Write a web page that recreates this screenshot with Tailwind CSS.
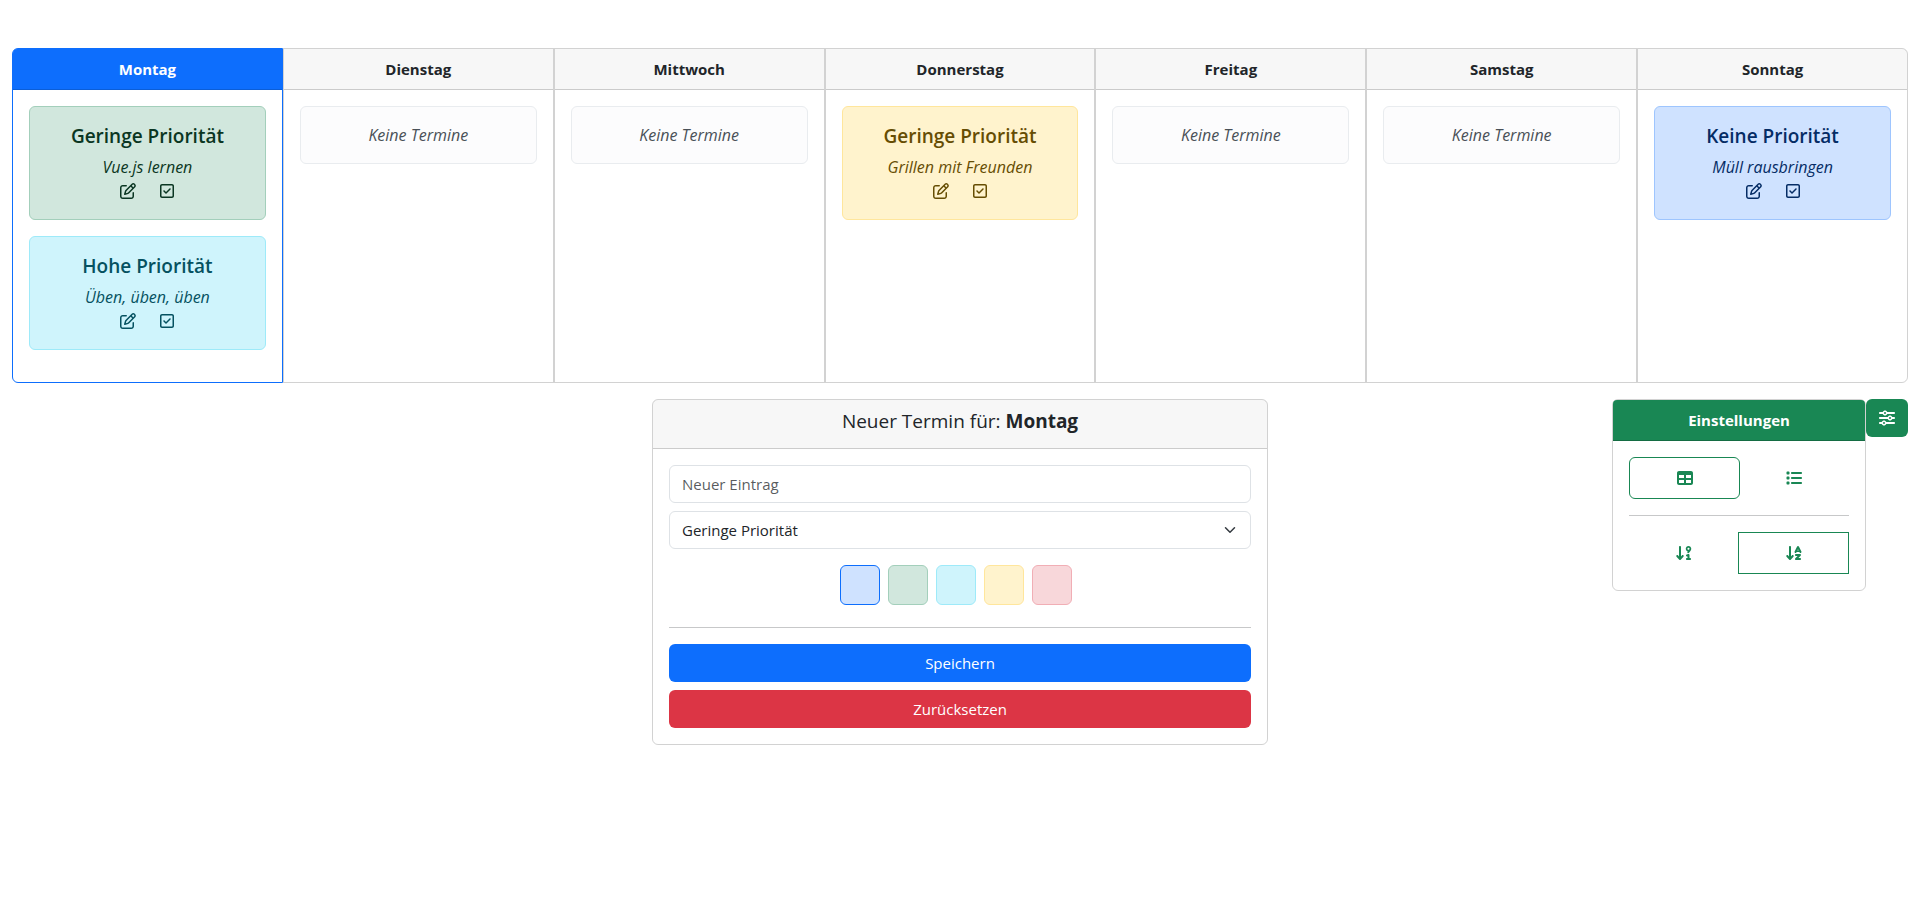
<!DOCTYPE html>
<html lang="de">
<head>
<meta charset="utf-8">
<meta name="viewport" content="width=device-width, initial-scale=1">
<title>Wochenplaner</title>
<script src="https://cdn.jsdelivr.net/npm/@tailwindcss/browser@4"></script>
</head>
<body class="bg-white font-['Open_Sans','Noto_Sans',sans-serif] text-[15px] leading-6 text-[#212529]">

<svg class="hidden" aria-hidden="true">
  <symbol id="edit" viewBox="0 0 512 512"><path d="M441 58.9L453.1 71c9.4 9.4 9.4 24.6 0 33.9L424 134.1 377.9 88 407 58.9c9.4-9.4 24.6-9.4 33.9 0zM209.8 256.2L344 121.9 390.1 168 255.8 302.2c-2.9 2.9-6.5 5-10.4 6.1l-58.5 16.7 16.7-58.5c1.1-3.9 3.2-7.5 6.1-10.4zM373.1 25L175.8 222.2c-8.7 8.7-15 19.4-18.3 31.1l-28.6 100c-2.4 8.4-.1 17.4 6.1 23.6s15.2 8.5 23.6 6.1l100-28.6c11.8-3.4 22.5-9.7 31.1-18.3L487 138.9c28.1-28.1 28.1-73.7 0-101.8L474.9 25C446.8-3.1 401.2-3.1 373.1 25zM88 64C39.4 64 0 103.4 0 152V424c0 48.6 39.4 88 88 88H360c48.6 0 88-39.4 88-88V312c0-13.3-10.7-24-24-24s-24 10.7-24 24V424c0 22.1-17.9 40-40 40H88c-22.1 0-40-17.9-40-40V152c0-22.1 17.9-40 40-40H200c13.3 0 24-10.7 24-24s-10.7-24-24-24H88z"/></symbol>
  <symbol id="check" viewBox="0 0 448 512"><path d="M64 80c-8.8 0-16 7.2-16 16V416c0 8.8 7.2 16 16 16H384c8.8 0 16-7.2 16-16V96c0-8.8-7.2-16-16-16H64zM0 96C0 60.7 28.7 32 64 32H384c35.3 0 64 28.7 64 64V416c0 35.3-28.7 64-64 64H64c-35.3 0-64-28.7-64-64V96zM337 209L209 337c-9.4 9.4-24.6 9.4-33.9 0l-64-64c-9.4-9.4-9.4-24.6 0-33.9s24.6-9.4 33.9 0l47 47L303 175c9.4-9.4 24.6-9.4 33.9 0s9.4 24.6 0 33.9z"/></symbol>
</svg>

<main class="px-3 pt-12" aria-label="Wochenplaner">
  <div class="grid grid-cols-7 text-center">
    <section class="rounded-l-md border border-[#0d6efd]">
      <h2 class="rounded-tl border-b border-[#0b5ed7] bg-[#0d6efd] py-2 font-bold text-white">Montag</h2>
      <div class="p-4">
        <article class="mb-4 rounded-md border border-[#a3cfbb] bg-[#d1e7dd] p-4 text-[#0a3622]">
          <h3 class="mb-[6px] text-[19px] leading-[26px] font-semibold">Geringe Priorität</h3>
          <p class="text-base italic">Vue.js lernen</p>
          <div class="flex h-6 items-center justify-center gap-6">
            <button type="button" aria-label="Bearbeiten"><svg class="h-4 w-4 fill-current"><use href="#edit"/></svg></button>
            <button type="button" aria-label="Erledigt"><svg class="h-4 w-3.5 fill-current"><use href="#check"/></svg></button>
          </div>
        </article>
        <article class="mb-4 rounded-md border border-[#9eeaf9] bg-[#cff4fc] p-4 text-[#055160]">
          <h3 class="mb-[6px] text-[19px] leading-[26px] font-semibold">Hohe Priorität</h3>
          <p class="text-base italic">Üben, üben, üben</p>
          <div class="flex h-6 items-center justify-center gap-6">
            <button type="button" aria-label="Bearbeiten"><svg class="h-4 w-4 fill-current"><use href="#edit"/></svg></button>
            <button type="button" aria-label="Erledigt"><svg class="h-4 w-3.5 fill-current"><use href="#check"/></svg></button>
          </div>
        </article>
      </div>
    </section>

    <section class="border border-black/[.175]">
      <h2 class="border-b border-black/[.175] bg-black/[.03] py-2 font-bold">Dienstag</h2>
      <div class="p-4"><p class="rounded-md border border-[#e9ecef] bg-[#fcfcfd] p-4 text-base text-[#495057] italic">Keine Termine</p></div>
    </section>

    <section class="border border-black/[.175]">
      <h2 class="border-b border-black/[.175] bg-black/[.03] py-2 font-bold">Mittwoch</h2>
      <div class="p-4"><p class="rounded-md border border-[#e9ecef] bg-[#fcfcfd] p-4 text-base text-[#495057] italic">Keine Termine</p></div>
    </section>

    <section class="border border-black/[.175]">
      <h2 class="border-b border-black/[.175] bg-black/[.03] py-2 font-bold">Donnerstag</h2>
      <div class="p-4">
        <article class="rounded-md border border-[#ffe69c] bg-[#fff3cd] p-4 text-[#664d03]">
          <h3 class="mb-[6px] text-[19px] leading-[26px] font-semibold">Geringe Priorität</h3>
          <p class="text-base italic">Grillen mit Freunden</p>
          <div class="flex h-6 items-center justify-center gap-6">
            <button type="button" aria-label="Bearbeiten"><svg class="h-4 w-4 fill-current"><use href="#edit"/></svg></button>
            <button type="button" aria-label="Erledigt"><svg class="h-4 w-3.5 fill-current"><use href="#check"/></svg></button>
          </div>
        </article>
      </div>
    </section>

    <section class="border border-black/[.175]">
      <h2 class="border-b border-black/[.175] bg-black/[.03] py-2 font-bold">Freitag</h2>
      <div class="p-4"><p class="rounded-md border border-[#e9ecef] bg-[#fcfcfd] p-4 text-base text-[#495057] italic">Keine Termine</p></div>
    </section>

    <section class="border border-black/[.175]">
      <h2 class="border-b border-black/[.175] bg-black/[.03] py-2 font-bold">Samstag</h2>
      <div class="p-4"><p class="rounded-md border border-[#e9ecef] bg-[#fcfcfd] p-4 text-base text-[#495057] italic">Keine Termine</p></div>
    </section>

    <section class="rounded-r-md border border-black/[.175]">
      <h2 class="rounded-tr border-b border-black/[.175] bg-black/[.03] py-2 font-bold">Sonntag</h2>
      <div class="p-4">
        <article class="rounded-md border border-[#9ec5fe] bg-[#cfe2ff] p-4 text-[#052c65]">
          <h3 class="mb-[6px] text-[19px] leading-[26px] font-semibold">Keine Priorität</h3>
          <p class="text-base italic">Müll rausbringen</p>
          <div class="flex h-6 items-center justify-center gap-6">
            <button type="button" aria-label="Bearbeiten"><svg class="h-4 w-4 fill-current"><use href="#edit"/></svg></button>
            <button type="button" aria-label="Erledigt"><svg class="h-4 w-3.5 fill-current"><use href="#check"/></svg></button>
          </div>
        </article>
      </div>
    </section>
  </div>

  <div class="mt-4 grid grid-cols-3 items-start gap-6">
    <form class="col-start-2 rounded-md border border-black/[.175]">
      <header class="rounded-t border-b border-black/[.175] bg-black/[.03] px-4 py-2 text-center">
        <h2 class="mb-[6px] text-[19px] leading-[26px] font-medium">Neuer Termin für: <strong class="font-bold">Montag</strong></h2>
      </header>
      <div class="p-4">
        <input type="text" aria-label="Neuer Eintrag" placeholder="Neuer Eintrag" class="mb-2 block h-[38px] w-full rounded-md border border-[#dee2e6] px-3 placeholder:text-[#212529]/75">
        <div class="relative mb-4">
          <select aria-label="Priorität" class="block h-[38px] w-full appearance-none rounded-md border border-[#dee2e6] bg-white pr-9 pl-3">
            <option>Keine Priorität</option>
            <option selected>Geringe Priorität</option>
            <option>Hohe Priorität</option>
          </select>
          <svg class="pointer-events-none absolute top-[13px] right-[13px] h-3 w-4" viewBox="0 0 16 16" fill="none" stroke="#343a40" stroke-width="2" stroke-linecap="round" stroke-linejoin="round" aria-hidden="true"><path d="m2 5 6 6 6-6"/></svg>
        </div>
        <fieldset class="flex justify-center pb-[6px]" aria-label="Farbe">
          <input type="radio" name="farbe" aria-label="Blau" checked class="mr-2 h-10 w-10 appearance-none rounded-md border border-[#0d6efd] bg-[#cfe2ff]">
          <input type="radio" name="farbe" aria-label="Grün" class="mr-2 h-10 w-10 appearance-none rounded-md border border-[#a3cfbb] bg-[#d1e7dd]">
          <input type="radio" name="farbe" aria-label="Türkis" class="mr-2 h-10 w-10 appearance-none rounded-md border border-[#9eeaf9] bg-[#cff4fc]">
          <input type="radio" name="farbe" aria-label="Gelb" class="mr-2 h-10 w-10 appearance-none rounded-md border border-[#ffe69c] bg-[#fff3cd]">
          <input type="radio" name="farbe" aria-label="Rot" class="mr-2 h-10 w-10 appearance-none rounded-md border border-[#f1aeb5] bg-[#f8d7da]">
        </fieldset>
        <hr class="my-4 border-[#212529]/25">
        <button type="submit" class="mb-2 block h-[38px] w-full rounded-md bg-[#0d6efd] text-white">Speichern</button>
        <button type="reset" class="block h-[38px] w-full rounded-md bg-[#dc3545] text-white">Zurücksetzen</button>
      </div>
    </form>

    <aside class="flex items-start justify-end">
      <section class="w-[254px] rounded-md border border-black/[.175]">
        <h2 class="rounded-t border-b border-[#146c43] bg-[#198754] py-2 text-center font-bold text-white">Einstellungen</h2>
        <div class="p-4 text-[#198754]">
          <div class="grid grid-cols-2" role="group" aria-label="Ansicht">
            <button type="button" aria-label="Tabelle" aria-pressed="true" class="-mr-px flex h-[42px] items-center justify-center rounded-md border border-[#198754]"><svg class="h-4 w-4 fill-current" viewBox="0 0 512 512"><path d="M64 256V160H224v96H64zm0 64H224v96H64V320zm224 96V320H448v96H288zM448 256H288V160H448v96zM64 32C28.7 32 0 60.7 0 96V416c0 35.3 28.7 64 64 64H448c35.3 0 64-28.7 64-64V96c0-35.3-28.7-64-64-64H64z"/></svg></button>
            <button type="button" aria-label="Liste" aria-pressed="false" class="flex h-[42px] items-center justify-center"><svg class="h-4 w-4 fill-current" viewBox="0 0 512 512"><path d="M40 48C26.7 48 16 58.7 16 72v48c0 13.3 10.7 24 24 24H88c13.3 0 24-10.7 24-24V72c0-13.3-10.7-24-24-24H40zM192 64c-17.7 0-32 14.3-32 32s14.3 32 32 32H480c17.7 0 32-14.3 32-32s-14.3-32-32-32H192zm0 160c-17.7 0-32 14.3-32 32s14.3 32 32 32H480c17.7 0 32-14.3 32-32s-14.3-32-32-32H192zm0 160c-17.7 0-32 14.3-32 32s14.3 32 32 32H480c17.7 0 32-14.3 32-32s-14.3-32-32-32H192zM16 232v48c0 13.3 10.7 24 24 24H88c13.3 0 24-10.7 24-24V232c0-13.3-10.7-24-24-24H40c-13.3 0-24 10.7-24 24zM40 368c-13.3 0-24 10.7-24 24v48c0 13.3 10.7 24 24 24H88c13.3 0 24-10.7 24-24V392c0-13.3-10.7-24-24-24H40z"/></svg></button>
          </div>
          <hr class="my-4 border-[#212529]/25">
          <div class="grid grid-cols-2" role="group" aria-label="Sortierung">
            <button type="button" aria-label="Absteigend nach Priorität" aria-pressed="false" class="flex h-[42px] items-center justify-center"><svg class="h-4 w-[18px] fill-current" viewBox="0 0 576 512"><path d="M160 480c9 0 17.5-3.8 23.6-10.4l88-96c11.9-13 11.1-33.3-2-45.2s-33.3-11.1-45.2 2L192 365.7V64c0-17.7-14.3-32-32-32s-32 14.3-32 32V365.7L95.6 330.4c-11.9-13-32.2-13.9-45.2-2s-13.9 32.2-2 45.2l88 96C142.5 476.2 151 480 160 480zM450.7 294c8.3 6 13.3 15.7 13.3 26v96h16c17.7 0 32 14.3 32 32s-14.3 32-32 32H384c-17.7 0-32-14.3-32-32s14.3-32 32-32h16V364.4l-5.9 2c-16.8 5.6-34.9-3.5-40.5-20.2s3.5-34.9 20.2-40.5l48-16c9.8-3.3 20.5-1.6 28.8 4.4zm-5-145.1a32 32 0 1 0 -27.4-57.8 32 32 0 1 0 27.4 57.8zm-40.7 54.9C369.6 192.4 344 159.2 344 120c0-48.6 39.4-88 88-88s88 39.4 88 88c0 23.5-7.5 46.3-21.5 65.2L449.7 251c-10.5 14.2-30.6 17.2-44.8 6.7s-17.2-30.6-6.7-44.8l6.8-9.2z"/></svg></button>
            <button type="button" aria-label="Alphabetisch" aria-pressed="true" class="-ml-px flex h-[42px] items-center justify-center border border-[#198754]"><svg class="h-4 w-[18px] fill-current" viewBox="0 0 576 512"><path d="M183.6 469.6C177.5 476.2 169 480 160 480s-17.5-3.8-23.6-10.4l-88-96c-11.9-13-11.1-33.3 2-45.2s33.3-11.1 45.2 2L128 365.7V64c0-17.7 14.3-32 32-32s32 14.3 32 32V365.7l32.4-35.4c11.9-13 32.2-13.9 45.2-2s13.9 32.2 2 45.2l-88 96zM320 320c0-17.7 14.3-32 32-32H480c12.9 0 24.6 7.8 29.6 19.8s2.2 25.7-6.9 34.9L429.3 416H480c17.7 0 32 14.3 32 32s-14.3 32-32 32H352c-12.9 0-24.6-7.8-29.6-19.8s-2.2-25.7 6.9-34.9L402.7 352H352c-17.7 0-32-14.3-32-32zM416 32c12.1 0 23.2 6.8 28.6 17.7l64 128 16 32c7.9 15.8 1.5 35-14.3 42.9s-35 1.5-42.9-14.3L460.2 224H371.8l-7.2 14.3c-7.9 15.8-27.1 22.2-42.9 14.3s-22.2-27.1-14.3-42.9l16-32 64-128C392.8 38.8 403.9 32 416 32zM395.8 176h40.4L416 135.6 395.8 176z"/></svg></button>
          </div>
        </div>
      </section>
      <button type="button" aria-label="Einstellungen umschalten" class="flex h-[38px] items-center rounded-md bg-[#198754] px-[13px] text-white"><svg class="h-4 w-4 fill-current" viewBox="0 0 512 512"><path d="M0 416c0 17.7 14.3 32 32 32l54.7 0c12.3 28.3 40.5 48 73.3 48s61-19.7 73.3-48L480 448c17.7 0 32-14.3 32-32s-14.3-32-32-32l-246.7 0c-12.3-28.3-40.5-48-73.3-48s-61 19.7-73.3 48L32 384c-17.7 0-32 14.3-32 32zm128 0a32 32 0 1 1 64 0 32 32 0 1 1 -64 0zM320 256a32 32 0 1 1 64 0 32 32 0 1 1 -64 0zm32-80c-32.8 0-61 19.7-73.3 48L32 224c-17.7 0-32 14.3-32 32s14.3 32 32 32l246.7 0c12.3 28.3 40.5 48 73.3 48s61-19.7 73.3-48l54.7 0c17.7 0 32-14.3 32-32s-14.3-32-32-32l-54.7 0c-12.3-28.3-40.5-48-73.3-48zM192 128a32 32 0 1 1 0-64 32 32 0 1 1 0 64zm73.3-64C253 35.7 224.8 16 192 16s-61 19.7-73.3 48L32 64C14.3 64 0 78.3 0 96s14.3 32 32 32l86.7 0c12.3 28.3 40.5 48 73.3 48s61-19.7 73.3-48L480 128c17.7 0 32-14.3 32-32s-14.3-32-32-32L265.3 64z"/></svg></button>
    </aside>
  </div>
</main>
</body>
</html>
